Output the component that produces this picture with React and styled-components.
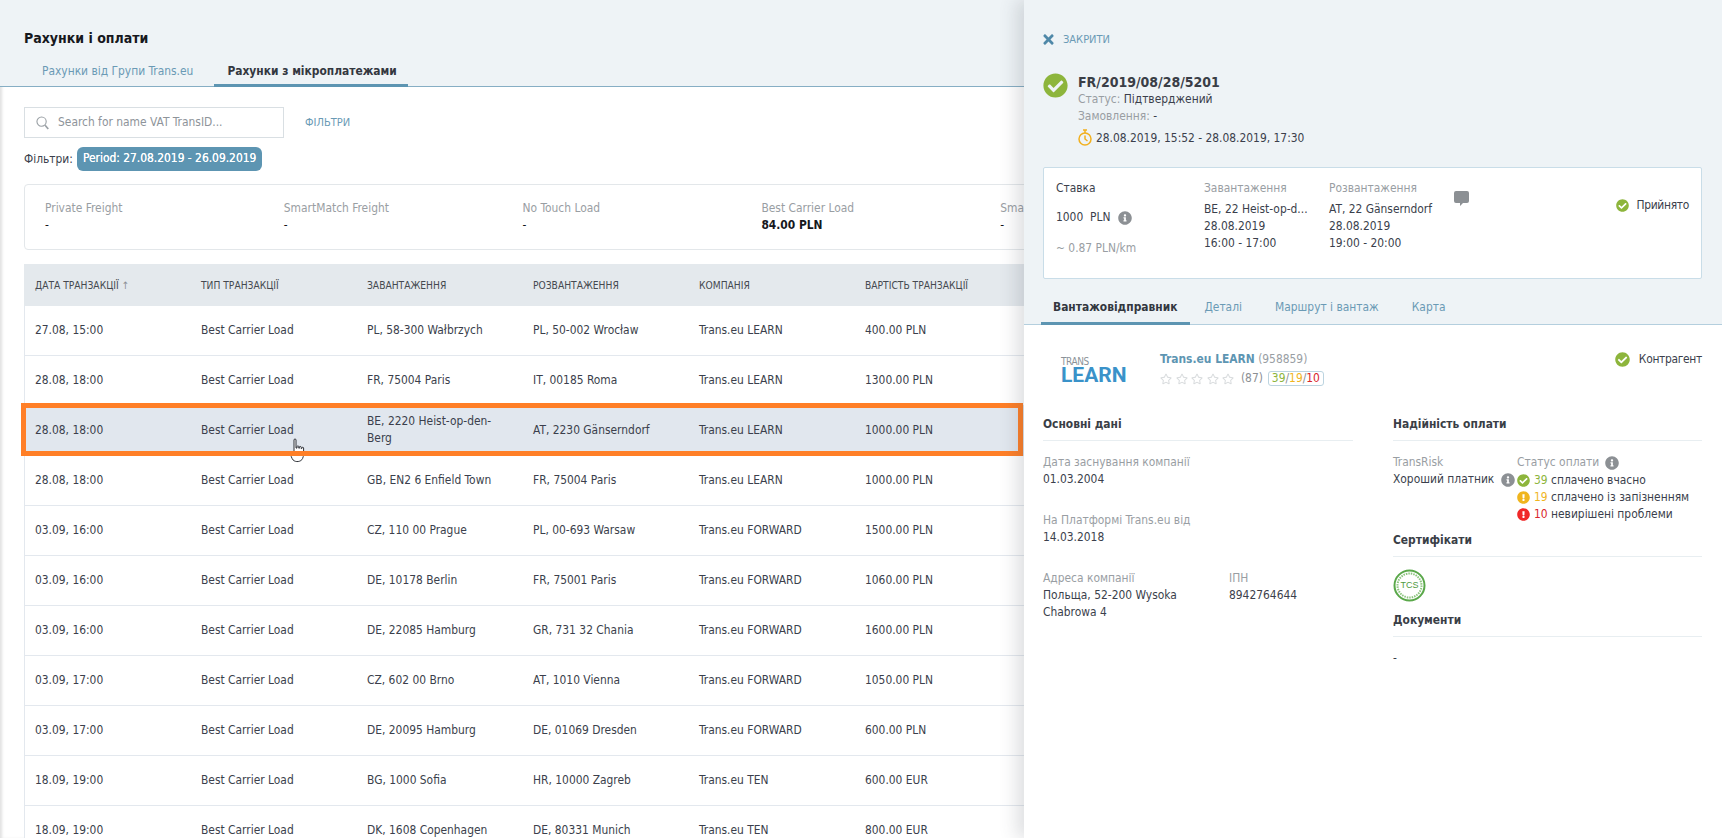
import React from "react";
import styled, { createGlobalStyle } from "styled-components";
import {
  FaCheckCircle,
  FaExclamationCircle,
  FaInfoCircle,
  FaRegStar,
  FaTimes,
} from "react-icons/fa";

const GlobalStyle = createGlobalStyle`
  html, body {
    margin: 0;
    padding: 0;
    background: #fff;
  }
  body {
    font-family: "DejaVu Sans Condensed", "DejaVu Sans", sans-serif;
    font-size: 11.9px;
    line-height: 17px;
    color: #3b3f4c;
  }
  *, *::before, *::after {
    box-sizing: border-box;
  }
`;

const ROWS = [
  ["27.08, 15:00", "Best Carrier Load", "PL, 58-300 Wałbrzych", "PL, 50-002 Wrocław", "Trans.eu LEARN", "400.00 PLN"],
  ["28.08, 18:00", "Best Carrier Load", "FR, 75004 Paris", "IT, 00185 Roma", "Trans.eu LEARN", "1300.00 PLN"],
  ["28.08, 18:00", "Best Carrier Load", "BE, 2220 Heist-op-den-Berg", "AT, 2230 Gänserndorf", "Trans.eu LEARN", "1000.00 PLN"],
  ["28.08, 18:00", "Best Carrier Load", "GB, EN2 6 Enfield Town", "FR, 75004 Paris", "Trans.eu LEARN", "1000.00 PLN"],
  ["03.09, 16:00", "Best Carrier Load", "CZ, 110 00 Prague", "PL, 00-693 Warsaw", "Trans.eu FORWARD", "1500.00 PLN"],
  ["03.09, 16:00", "Best Carrier Load", "DE, 10178 Berlin", "FR, 75001 Paris", "Trans.eu FORWARD", "1060.00 PLN"],
  ["03.09, 16:00", "Best Carrier Load", "DE, 22085 Hamburg", "GR, 731 32 Chania", "Trans.eu FORWARD", "1600.00 PLN"],
  ["03.09, 17:00", "Best Carrier Load", "CZ, 602 00 Brno", "AT, 1010 Vienna", "Trans.eu FORWARD", "1050.00 PLN"],
  ["03.09, 17:00", "Best Carrier Load", "DE, 20095 Hamburg", "DE, 01069 Dresden", "Trans.eu FORWARD", "600.00 PLN"],
  ["18.09, 19:00", "Best Carrier Load", "BG, 1000 Sofia", "HR, 10000 Zagreb", "Trans.eu TEN", "600.00 EUR"],
  ["18.09, 19:00", "Best Carrier Load", "DK, 1608 Copenhagen", "DE, 80331 Munich", "Trans.eu TEN", "800.00 EUR"],
];

const COLUMNS = ["Дата транзакції", "Тип транзакції", "Завантаження", "Розвантаження", "Компанія", "Вартість транзакції"];

const SUMMARY = [
  ["Private Freight", "-"],
  ["SmartMatch Freight", "-"],
  ["No Touch Load", "-"],
  ["Best Carrier Load", "84.00 PLN", true],
  ["Smart Load", "-"],
];

const Page = styled.div`
  position: relative;
  width: 1722px;
  height: 838px;
  overflow: hidden;
  box-shadow: inset 3px 0 3px -1px rgba(0, 0, 0, 0.12);
`;

const PageHead = styled.header`
  height: 87px;
  padding: 29px 0 0 24px;
  background: #eef3f6;
  border-bottom: 1px solid #86aec4;
`;

const Title = styled.h1`
  margin: 0;
  font-size: 14px;
  line-height: 18px;
  font-weight: 700;
  color: #16181d;
`;

const TabBar = styled.div`
  display: flex;
  align-items: flex-end;
  height: ${(p) => p.$height}px;
  margin-top: ${(p) => p.$top}px;
`;

const PageTab = styled.div`
  height: 100%;
  padding: 6px ${(p) => (p.$active ? 11 : 21)}px 0 ${(p) => (p.$active ? 13 : 18)}px;
  border-bottom: 3px solid ${(p) => (p.$active ? "#5d95b2" : "transparent")};
  font-weight: ${(p) => (p.$active ? 700 : 400)};
  color: ${(p) => (p.$active ? "#33373f" : "#6a9ab5")};
`;

const Content = styled.main`
  padding: 20px 0 0 24px;
`;

const SearchRow = styled.div`
  display: flex;
  align-items: center;
`;

const SearchBox = styled.div`
  display: flex;
  align-items: center;
  width: 260px;
  height: 31px;
  padding-left: 11px;
  border: 1px solid #d9dfe3;
  color: #8e949a;
`;

const SearchIcon = styled.svg`
  width: 13px;
  height: 14px;
  margin-right: 9px;
`;

const FilterLink = styled.span`
  margin-left: 21px;
  font-size: 11px;
  color: #6a9ab5;
`;

const FilterRow = styled.div`
  display: flex;
  align-items: center;
  margin-top: 9px;
  height: 24px;
`;

const FilterChip = styled.span`
  margin-left: 4px;
  height: 24px;
  padding: 3px 6px;
  border-radius: 6px;
  background: #5d95b2;
  color: #fff;
  text-shadow: 0 0 0.5px #fff;
`;

const SummaryCard = styled.section`
  display: flex;
  width: 1300px;
  height: 66px;
  margin-top: 13px;
  padding: 15px 0 0 20px;
  border: 1px solid #e3e7ea;
  border-radius: 4px;
`;

const SummaryItem = styled.div`
  flex: 0 0 238.8px;
`;

const MutedLabel = styled.div`
  color: #999ea3;
`;

const SummaryValue = styled.div`
  color: #16181d;
  font-weight: ${(p) => (p.$bold ? 700 : 400)};
`;

const TableHead = styled.div`
  display: flex;
  align-items: center;
  width: 1300px;
  height: 42px;
  margin-top: 14px;
  background: #e4e9ed;
`;

const HeadCell = styled.div`
  flex: 0 0 166px;
  padding-left: 11px;
  font-size: 10.2px;
  text-transform: uppercase;
  color: #454950;
`;

const SortArrow = styled.span`
  margin-left: 3px;
  color: #8b9096;
`;

const Row = styled.div`
  position: relative;
  z-index: ${(p) => (p.$selected ? 1 : "auto")};
  display: flex;
  align-items: center;
  width: 1300px;
  height: 50px;
  padding-bottom: ${(p) => (p.$selected ? 2 : 1)}px;
  border-left: 1px solid #e3e8ee;
  border-bottom: ${(p) => (p.$selected ? "none" : "1px solid #e3e8ee")};
  background: ${(p) => (p.$selected ? "#e1e7ee" : "#fff")};

  ${(p) =>
    p.$selected &&
    `&::after {
      content: "";
      position: absolute;
      left: -4px;
      top: -3px;
      width: 1002px;
      height: 53px;
      border: 5px solid #ff7f27;
      pointer-events: none;
    }`}
`;

const Cell = styled.div`
  flex: 0 0 166px;
  padding: 0 10px;
`;

const HandCursor = styled.svg`
  position: absolute;
  left: 265px;
  top: 32px;
  width: 18px;
  height: 26px;
`;

const Drawer = styled.aside`
  position: absolute;
  z-index: 2;
  top: 0;
  right: 0;
  bottom: 0;
  width: 698px;
  background: #fff;
  box-shadow: -8px 0 16px rgba(60, 70, 80, 0.16);
`;

const DrawerHead = styled.div`
  height: 325px;
  padding: 31px 20px 0 19px;
  background: #eef3f6;
  border-bottom: 1px solid #b4cfde;
`;

const CloseRow = styled.div`
  display: flex;
  align-items: center;
  height: 17px;
  font-size: 11px;
  color: #6a9ab5;

  svg {
    width: 13px;
    height: 15px;
    margin-left: -1px;
    margin-right: 8px;
    color: #4f88a8;
  }
`;

const OrderHead = styled.div`
  display: flex;
  margin-top: 25px;
`;

const BigCheck = styled(FaCheckCircle)`
  flex: none;
  width: 25px;
  height: 25px;
  color: #8db53c;
`;

const OrderInfo = styled.div`
  margin-left: 10px;
`;

const OrderNumber = styled.div`
  font-size: 14px;
  line-height: 18px;
  font-weight: 700;
  color: #3a3e46;
`;

const DateLine = styled.div`
  display: flex;
  align-items: center;
  margin-top: 4px;
  height: 18px;
`;

const TimerIcon = styled.svg`
  width: 14px;
  height: 17px;
  margin-right: 4px;
  margin-top: -2px;
`;

const RateCard = styled.section`
  display: flex;
  height: 112px;
  margin-top: 20px;
  padding: 12px 12px 0 12px;
  background: #fff;
  border: 1px solid #c9dde8;
  border-radius: 2px;
`;

const RateCol = styled.div`
  flex: none;
  width: 148px;
`;

const RateValue = styled.div`
  display: flex;
  align-items: center;
  margin-top: ${(p) => p.$top}px;
  color: ${(p) => p.$color || "inherit"};
`;

const InfoIcon = styled(FaInfoCircle)`
  flex: none;
  width: 14px;
  height: 14px;
  margin-left: ${(p) => p.$left || 0}px;
  color: #8c9094;
`;

const StopCol = styled.div`
  flex: none;
  width: 125px;
`;

const StopLabel = styled(MutedLabel)`
  margin-bottom: 4px;
`;

const StopText = styled.div`
  white-space: nowrap;
`;

const CommentIcon = styled.svg`
  width: 15px;
  height: 15px;
  margin-top: 11px;
`;

const StatusTag = styled.div`
  display: flex;
  align-items: center;
  height: 17px;
  margin: ${(p) => p.$top}px 0 0 auto;
  letter-spacing: -0.3px;

  svg {
    width: ${(p) => p.$icon}px;
    height: ${(p) => p.$icon}px;
    margin-right: ${(p) => p.$gap}px;
    color: #8db53c;
  }
`;

const DrawerTab = styled.div`
  height: 100%;
  padding: 6px ${(p) => (p.$active ? 13 : 14)}px 0 ${(p) => (p.$active ? 12 : 14)}px;
  margin-right: ${(p) => (p.$active ? 0 : 5)}px;
  margin-left: ${(p) => (p.$active ? -2 : 0)}px;
  border-bottom: 3px solid ${(p) => (p.$active ? "#5d95b2" : "transparent")};
  font-weight: ${(p) => (p.$active ? 700 : 400)};
  color: ${(p) => (p.$active ? "#33373f" : "#6a9ab5")};
`;

const DrawerBody = styled.div`
  padding: 0 20px 0 19px;
`;

const CompanyRow = styled.div`
  display: flex;
  height: 91px;
  padding-top: 26px;
`;

const Logo = styled.div`
  flex: none;
  width: 117px;
  padding: 6px 0 0 18px;
`;

const LogoTop = styled.div`
  font-size: 10px;
  line-height: 9px;
  letter-spacing: -0.4px;
  color: #8b9298;
`;

const LogoMain = styled.div`
  font-family: Roboto, sans-serif;
  font-size: 21px;
  line-height: 18px;
  font-weight: 700;
  color: #3a92c9;
`;

const CompanyName = styled.div`
  color: #999ea3;

  b {
    color: #5d95b2;
  }
`;

const RatingRow = styled.div`
  display: flex;
  align-items: center;
  margin-top: 2px;
  color: #8c9094;
`;

const Star = styled(FaRegStar)`
  width: 12px;
  height: 12px;
  margin-right: 3.5px;
  color: #d9dcde;
`;

const ScoreBadge = styled.span`
  display: inline-block;
  margin-left: 5px;
  height: 15px;
  line-height: 13px;
  padding: 0 3px;
  border: 1px solid #bcd4e0;
  border-radius: 3px;
`;

const Tone = styled.span`
  color: ${(p) => p.$color};
`;

const Columns = styled.div`
  display: grid;
  grid-template-columns: 310px 309px;
  column-gap: 40px;
`;

const SectionTitle = styled.h3`
  margin: ${(p) => p.$top || 0}px 0 0;
  padding-bottom: 7px;
  border-bottom: 1px solid #e8eef1;
  font-size: 11.9px;
  line-height: 17px;
  font-weight: 700;
  color: #3a3e46;
`;

const Field = styled.div`
  margin-top: ${(p) => p.$top}px;
`;

const FieldPair = styled.div`
  display: flex;
  margin-top: 24px;
`;

const AddressField = styled.div`
  flex: none;
  width: 186px;
`;

const RiskRow = styled.div`
  display: flex;
  margin-top: 13px;
`;

const RiskCol = styled.div`
  flex: none;
  width: 124px;
`;

const WithIcon = styled.div`
  display: flex;
  align-items: center;
`;

const PayLine = styled.div`
  display: flex;
  align-items: center;
  margin-top: ${(p) => p.$top || 0}px;

  svg {
    width: 13px;
    height: 13px;
    margin-right: 4px;
    color: ${(p) => p.$color};
  }
`;

const PayCount = styled.span`
  width: 17px;
  color: ${(p) => p.$color};
`;

const CertBadge = styled.svg`
  display: block;
  width: 33px;
  height: 33px;
  margin-top: 12px;
`;

export default function App() {
  return (
    <>
      <GlobalStyle />
      <Page>
        <PageHead>
          <Title>Рахунки і оплати</Title>
          <TabBar $height={30} $top={10}>
            <PageTab>Рахунки від Групи Trans.eu</PageTab>
            <PageTab $active>Рахунки з мікроплатежами</PageTab>
          </TabBar>
        </PageHead>

        <Content>
          <SearchRow>
            <SearchBox>
              <SearchIcon viewBox="0 0 14 15" fill="none" stroke="#9aa0a5" strokeWidth="1.2">
                <circle cx="6" cy="6" r="5" />
                <path d="M9.8 10 13.2 14" strokeWidth="1.8" />
              </SearchIcon>
              Search for name VAT TransID...
            </SearchBox>
            <FilterLink>ФІЛЬТРИ</FilterLink>
          </SearchRow>

          <FilterRow>
            Фільтри:
            <FilterChip>Period: 27.08.2019 - 26.09.2019</FilterChip>
          </FilterRow>

          <SummaryCard>
            {SUMMARY.map(([label, value, bold]) => (
              <SummaryItem key={label}>
                <MutedLabel>{label}</MutedLabel>
                <SummaryValue $bold={bold}>{value}</SummaryValue>
              </SummaryItem>
            ))}
          </SummaryCard>

          <TableHead>
            {COLUMNS.map((col, i) => (
              <HeadCell key={col}>
                {col}
                {i === 0 && <SortArrow>↑</SortArrow>}
              </HeadCell>
            ))}
          </TableHead>

          {ROWS.map((row, i) => (
            <Row key={i} $selected={i === 2}>
              {row.map((text, j) => (
                <Cell key={j}>{text}</Cell>
              ))}
              {i === 2 && (
                <HandCursor viewBox="0 0 18 26">
                  <path
                    d="M4 2c0-1.4 2-1.4 2 0v8l1 .1V8.6c0-1 1.8-1 1.8 0v1.6h.6V9.2c0-1 1.8-1 1.8 0v1.4h.6V10c0-1 1.8-1 1.8 0v6c0 2-.5 3-1 4.5-1.5 3.5-7 4-9.5 1.5C1.5 20 .8 17.5.5 15.5c-.2-1.2 1.2-1.6 2-.6l1.5 1.6Z"
                    fill="#fff"
                    stroke="#2d3036"
                    strokeWidth="1"
                  />
                </HandCursor>
              )}
            </Row>
          ))}
        </Content>

        <Drawer>
          <DrawerHead>
            <CloseRow>
              <FaTimes />
              ЗАКРИТИ
            </CloseRow>

            <OrderHead>
              <BigCheck />
              <OrderInfo>
                <OrderNumber>FR/2019/08/28/5201</OrderNumber>
                <div>
                  <Tone $color="#999ea3">Статус:</Tone> Підтверджений
                </div>
                <div>
                  <Tone $color="#999ea3">Замовлення:</Tone> -
                </div>
                <DateLine>
                  <TimerIcon viewBox="0 0 14 17" fill="none" stroke="#f2b01e" strokeWidth="1.5">
                    <circle cx="7" cy="10" r="6" />
                    <path d="M7 1v3M5 1h4M7 6.5V10l2.5 2" />
                  </TimerIcon>
                  28.08.2019, 15:52 - 28.08.2019, 17:30
                </DateLine>
              </OrderInfo>
            </OrderHead>

            <RateCard>
              <RateCol>
                <div>Ставка</div>
                <RateValue $top={12}>
                  1000&nbsp;&nbsp;PLN
                  <InfoIcon $left={8} />
                </RateValue>
                <RateValue $top={14} $color="#999ea3">~ 0.87 PLN/km</RateValue>
              </RateCol>
              <StopCol>
                <StopLabel>Завантаження</StopLabel>
                <StopText>BE, 22 Heist-op-d...</StopText>
                <div>28.08.2019</div>
                <div>16:00 - 17:00</div>
              </StopCol>
              <StopCol>
                <StopLabel>Розвантаження</StopLabel>
                <StopText>AT, 22 Gänserndorf</StopText>
                <div>28.08.2019</div>
                <div>19:00 - 20:00</div>
              </StopCol>
              <CommentIcon viewBox="0 0 15 15">
                <path d="M2 0h11a2 2 0 0 1 2 2v8a2 2 0 0 1-2 2H9l-3 3v-3H2a2 2 0 0 1-2-2V2a2 2 0 0 1 2-2Z" fill="#8c9094" />
              </CommentIcon>
              <StatusTag $top={17} $icon={13} $gap={7}>
                <FaCheckCircle />
                Прийнято
              </StatusTag>
            </RateCard>

            <TabBar $height={32} $top={14}>
              <DrawerTab $active>Вантажовідправник</DrawerTab>
              <DrawerTab>Деталі</DrawerTab>
              <DrawerTab>Маршрут і вантаж</DrawerTab>
              <DrawerTab>Карта</DrawerTab>
            </TabBar>
          </DrawerHead>

          <DrawerBody>
            <CompanyRow>
              <Logo>
                <LogoTop>TRANS</LogoTop>
                <LogoMain>LEARN</LogoMain>
              </Logo>
              <div>
                <CompanyName>
                  <b>Trans.eu LEARN</b> (958859)
                </CompanyName>
                <RatingRow>
                  <Star />
                  <Star />
                  <Star />
                  <Star />
                  <Star />
                  <span>&nbsp;(87)</span>
                  <ScoreBadge>
                    <Tone $color="#8db53c">39</Tone>/<Tone $color="#f0b51e">19</Tone>/<Tone $color="#d9262b">10</Tone>
                  </ScoreBadge>
                </RatingRow>
              </div>
              <StatusTag $top={0} $icon={15} $gap={9}>
                <FaCheckCircle />
                Контрагент
              </StatusTag>
            </CompanyRow>

            <Columns>
              <div>
                <SectionTitle>Основні дані</SectionTitle>
                <Field $top={13}>
                  <MutedLabel>Дата заснування компанії</MutedLabel>
                  <div>01.03.2004</div>
                </Field>
                <Field $top={24}>
                  <MutedLabel>На Платформі Trans.eu від</MutedLabel>
                  <div>14.03.2018</div>
                </Field>
                <FieldPair>
                  <AddressField>
                    <MutedLabel>Адреса компанії</MutedLabel>
                    <div>Польща, 52-200 Wysoka</div>
                    <div>Chabrowa 4</div>
                  </AddressField>
                  <div>
                    <MutedLabel>ІПН</MutedLabel>
                    <div>8942764644</div>
                  </div>
                </FieldPair>
              </div>

              <div>
                <SectionTitle>Надійність оплати</SectionTitle>
                <RiskRow>
                  <RiskCol>
                    <MutedLabel>TransRisk</MutedLabel>
                    <WithIcon>
                      Хороший платник
                      <InfoIcon $left={7} />
                    </WithIcon>
                  </RiskCol>
                  <div>
                    <WithIcon>
                      <MutedLabel>Статус оплати</MutedLabel>
                      <InfoIcon $left={6} />
                    </WithIcon>
                    <PayLine $color="#8db53c" $top={1}>
                      <FaCheckCircle />
                      <PayCount $color="#8db53c">39</PayCount>сплачено вчасно
                    </PayLine>
                    <PayLine $color="#f0b51e">
                      <FaExclamationCircle />
                      <PayCount $color="#f0b51e">19</PayCount>сплачено із запізненням
                    </PayLine>
                    <PayLine $color="#f02828">
                      <FaExclamationCircle />
                      <PayCount $color="#d9262b">10</PayCount>невирішені проблеми
                    </PayLine>
                  </div>
                </RiskRow>

                <SectionTitle $top={9}>Сертифікати</SectionTitle>
                <CertBadge viewBox="0 0 33 33">
                  <circle cx="16.5" cy="16.5" r="15" fill="#fff" stroke="#5aa84a" strokeWidth="2" />
                  <circle cx="16.5" cy="16.5" r="12" fill="none" stroke="#8cc47e" strokeWidth="2" strokeDasharray="1.5 1" />
                  <text x="16.5" y="19" textAnchor="middle" fontSize="9" fill="#4f9a40" fontFamily="Liberation Sans, sans-serif">
                    TCS
                  </text>
                </CertBadge>

                <SectionTitle $top={10}>Документи</SectionTitle>
                <Field $top={13}>-</Field>
              </div>
            </Columns>
          </DrawerBody>
        </Drawer>
      </Page>
    </>
  );
}
